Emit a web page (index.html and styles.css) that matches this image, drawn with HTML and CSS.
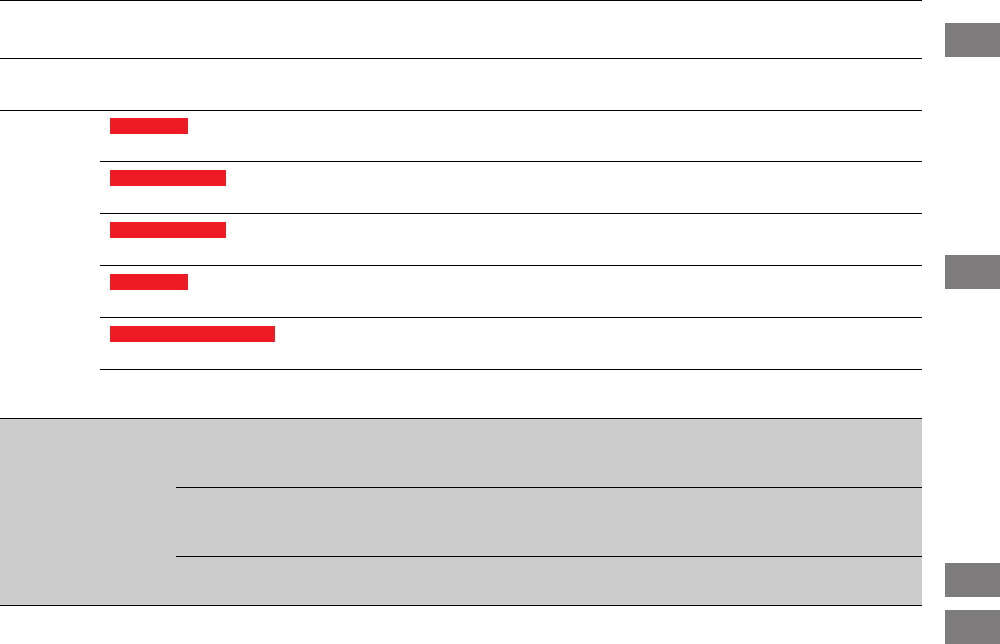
FILE: index.html
```html
<!DOCTYPE html>
<html>
<head>
<meta charset="utf-8">
<link rel="stylesheet" href="styles.css">
</head>
<body>
<div class="page">
  <div class="main">
    <div class="row row-head"></div>
    <div class="row row-sub"></div>
    <div class="group">
      <div class="group-side"></div>
      <div class="group-rows">
        <div class="item item-first"><span class="bar" style="width:78px"></span></div>
        <div class="item"><span class="bar" style="width:116px"></span></div>
        <div class="item"><span class="bar" style="width:116px"></span></div>
        <div class="item"><span class="bar" style="width:78px"></span></div>
        <div class="item"><span class="bar" style="width:165px"></span></div>
      </div>
    </div>
    <div class="shaded">
      <div class="shaded-side"></div>
      <div class="shaded-rows">
        <div class="srow srow-first"></div>
        <div class="srow"></div>
        <div class="srow srow-last"></div>
      </div>
    </div>
  </div>
  <div class="tabs">
    <div class="tab tab-1"></div>
    <div class="tab tab-2"></div>
    <div class="tab tab-3"></div>
    <div class="tab tab-4"></div>
  </div>
</div>
</body>
</html>
```
FILE: styles.css
```css
* { box-sizing: border-box; }
html, body {
  margin: 0;
  padding: 0;
  background: #ffffff;
  font-family: "Liberation Sans", Arial, sans-serif;
}
.page {
  display: flex;
  width: 1000px;
  height: 644px;
  overflow: hidden;
}
.main {
  width: 922px;
  flex: none;
  display: flex;
  flex-direction: column;
}
.row {
  border-top: 1px solid #000;
}
.row-head { height: 58px; }
.row-sub { height: 52px; }
.group {
  display: flex;
  border-top: 1px solid #000;
}
.group-side { width: 100px; flex: none; }
.group-rows {
  flex: 1;
  display: flex;
  flex-direction: column;
  border-bottom: 1px solid #000;
}
.item {
  height: 52px;
  border-top: 1px solid #000;
  padding: 8px 0 0 10px;
}
.item-first {
  border-top: none;
  height: 50px;
  padding-top: 7px;
}
.bar {
  display: block;
  height: 16px;
  background: #ed1c24;
}
.shaded {
  margin-top: 48px;
  display: flex;
  background: #cccccc;
  border-top: 1px solid #000;
  border-bottom: 1px solid #000;
}
.shaded-side { width: 176px; flex: none; }
.shaded-rows {
  flex: 1;
  display: flex;
  flex-direction: column;
}
.srow {
  height: 69px;
  border-top: 1px solid #000;
}
.srow-first { border-top: none; height: 68px; }
.srow-last { height: 49px; }
.tabs {
  flex: 1;
  display: flex;
  flex-direction: column;
  padding-left: 23px;
}
.tab {
  width: 55px;
  height: 34px;
  background: #7d7b7c;
  flex: none;
}
.tab-1 { margin-top: 23px; }
.tab-2 { margin-top: 198px; }
.tab-3 { margin-top: 274px; }
.tab-4 { margin-top: 13px; }
```
